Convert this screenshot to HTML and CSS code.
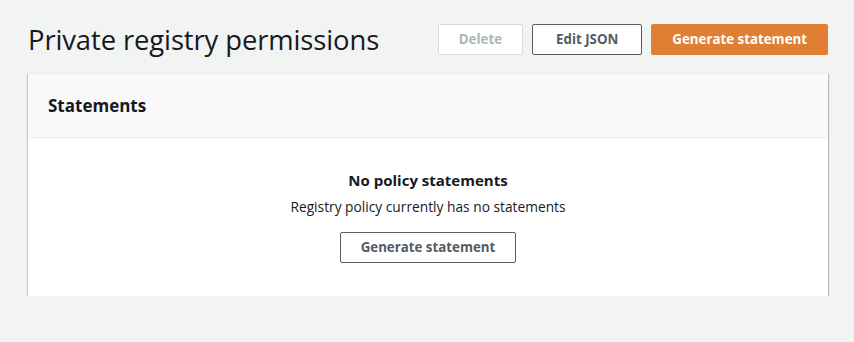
FILE: index.html
```html
<!DOCTYPE html>
<html lang="en">
<head>
<meta charset="utf-8">
<title>Private registry permissions</title>
<link rel="stylesheet" href="styles.css">
</head>
<body>
<div class="page">
  <div class="page-header">
    <h1 class="title">Private registry permissions</h1>
    <div class="actions">
      <button class="btn btn-disabled" disabled>Delete</button>
      <button class="btn btn-normal btn-wide">Edit JSON</button>
      <button class="btn btn-primary">Generate statement</button>
    </div>
  </div>
  <div class="card">
    <div class="card-header">
      <h2 class="card-title">Statements</h2>
    </div>
    <div class="card-body">
      <div class="empty-title">No policy statements</div>
      <p class="empty-text">Registry policy currently has no statements</p>
      <button class="btn btn-normal">Generate statement</button>
    </div>
  </div>
</div>
</body>
</html>
```

FILE: styles.css
```css
html, body {
  margin: 0;
  padding: 0;
  background: #f2f3f3;
}
body {
  font-family: "Open Sans", "Noto Sans", sans-serif;
  color: #16191f;
}
.page {
  padding: 24px 26px 0 28px;
}
.page-header {
  display: flex;
  justify-content: space-between;
  align-items: center;
  height: 31px;
}
.title {
  margin: 0;
  font-size: 27.4px;
  font-weight: 400;
  line-height: 31px;
  color: #16191f;
  letter-spacing: -0.1px;
}
.actions {
  display: flex;
  gap: 9px;
}
.btn {
  font-family: "Open Sans", "Noto Sans", sans-serif;
  font-size: 13.3px;
  font-weight: 700;
  line-height: 21px;
  padding: 4px 20px;
  border-radius: 2px;
  border: 1px solid #545b64;
  background: #ffffff;
  color: #545b64;
  cursor: pointer;
}
.btn-wide {
  padding: 4px 23px;
}
.btn-disabled {
  border-color: #d5dbdb;
  color: #aab7b8;
  cursor: default;
}
.btn-primary {
  background: #e07f33;
  border-color: #e07f33;
  color: #ffffff;
}
.card {
  margin-top: 18px;
  background: #ffffff;
  border-top: 1px solid #eaeded;
  box-shadow: 0 1px 1px 0 rgba(0, 28, 36, 0.45), 1px 1px 1px 0 rgba(0, 28, 36, 0.2), -1px 1px 1px 0 rgba(0, 28, 36, 0.12);
}
.card-header {
  background: #fafafa;
  border-bottom: 1px solid #eaeded;
  height: 63px;
  display: flex;
  align-items: center;
  padding: 0 20px;
}
.card-title {
  margin: 0;
  font-size: 17px;
  font-weight: 700;
  line-height: 22px;
  color: #16191f;
}
.card-body {
  display: flex;
  flex-direction: column;
  align-items: center;
  padding: 31px 20px 33px;
}
.empty-title {
  font-size: 15px;
  font-weight: 700;
  line-height: 22px;
}
.empty-text {
  margin: 6px 0 0;
  font-size: 13.75px;
  line-height: 20px;
}
.card-body .btn {
  margin-top: 15px;
}
```
